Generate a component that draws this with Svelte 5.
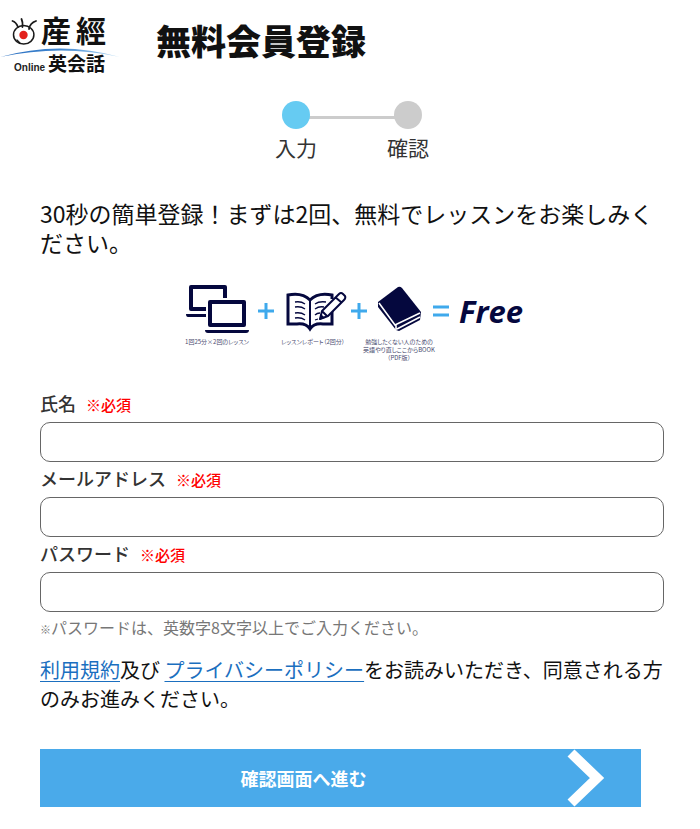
<script lang="ts">
	const steps = [
		{ label: '入力', active: true },
		{ label: '確認', active: false }
	];

	const fields = [
		{ id: 'name', label: '氏名', type: 'text' },
		{ id: 'email', label: 'メールアドレス', type: 'email' },
		{ id: 'password', label: 'パスワード', type: 'password' }
	];

	let values: Record<string, string> = $state({ name: '', email: '', password: '' });
</script>

<header class="header">
	<svg class="logo" viewBox="0 0 120 80" role="img" aria-label="産經Online英会話">
		<defs>
			<linearGradient id="arc">
				<stop offset="0" stop-color="#2c6fc0" />
				<stop offset="0.5" stop-color="#3f86d0" />
				<stop offset="1" stop-color="#b9dcf3" />
			</linearGradient>
		</defs>
		<g fill="none" stroke="#1a1a1a" stroke-linecap="round">
			<ellipse cx="23.700" cy="34.800" rx="10.200" ry="9.300" stroke-width="1.500" />
			<path d="M18 27Q16 22 12.500 21M22.500 27Q23 22 21.500 19M29 29Q30 23 36 21" stroke-width="1.800" />
			<path d="M17 40L20 43" stroke-width="1.200" />
		</g>
		<circle cx="23.500" cy="35" r="4.200" fill="#e3211c" />
		<path d="M0 57Q60 40 120 57Q62 44 0 57Z" fill="url(#arc)" />
		<text class="logo-main" x="41" y="42">産</text>
		<text class="logo-main" x="76" y="42">經</text>
		<text class="logo-online" x="14" y="71">Online</text>
		<text class="logo-sub" x="48" y="71">英会話</text>
	</svg>
	<h1>無料会員登録</h1>
</header>

<main class="main">
	<ol class="steps">
		{#each steps as step}
			<li class="step" class:active={step.active} aria-current={step.active ? 'step' : undefined}>
				<span class="dot"></span>
				<span>{step.label}</span>
			</li>
		{/each}
	</ol>

	<p class="intro">30秒の簡単登録！まずは2回、無料でレッスンをお楽しみください。</p>

	<svg class="offer" viewBox="0 0 340 80" role="img" aria-label="レッスン、レポート、BOOKが無料">
		<!-- two laptops -->
		<g fill="none" stroke="#05083e" stroke-width="4" stroke-linejoin="round">
			<path d="M43 15V4H9V26H24" />
			<rect x="28" y="19" width="34" height="23" />
		</g>
		<path d="M4 31H24V34H6Q4 34 4 31ZM23 47H67Q67 50 64 50H26Q23 50 23 47Z" fill="#05083e" />

		<!-- open book and pencil -->
		<g fill="none" stroke="#05083e" stroke-width="3">
			<path d="M150 16V12Q136 9 128 17Q120 9 106 12V41H115Q124 40 128 46Q132 40 141 41H150V28" />
			<path d="M128 17V46" stroke-width="2" />
		</g>
		<g fill="none" stroke="#05083e" stroke-width="1.300">
			<path d="M113 19Q119 18 123 21M113 24Q119 23 123 26M113 30Q119 29 123 32M113 35Q119 34 123 37" />
			<path d="M133 21Q137 18 144 19M133 26Q137 23 142 24M133 32Q135 30 138 30M133 37L136 36" />
		</g>
		<path d="M140 28L157 11Q159 9 161 11L163 13Q164 15 162 17L146 33L138 36ZM140 28L145 33M153 14L159 19" fill="#fff" stroke="#05083e" stroke-width="2" stroke-linejoin="round" />
		<path d="M137 37L139 31L143 35Z" fill="#05083e" />

		<!-- closed book -->
		<path d="M196 19L216 4Q218 3 220 5L239 29L238 37L217 48L214 47L196 24Z" fill="#05083e" />
		<path d="M197 20L213 42L238 30M215 46L238 34M214 42V47" fill="none" stroke="#fff" stroke-width="1.600" />

		<g fill="none" stroke="#3fa9ec" stroke-width="3">
			<path d="M76 28H92M84 20V36M169 28H185M177 20V36M251 24H267M251 32H267" />
		</g>
		<text class="free" x="277" y="40">Free</text>

		<g class="caption">
			<text x="35" y="61">1回25分×2回のレッスン</text>
			<text x="131" y="61">レッスンレポート（2回分）</text>
			<text x="217" y="61">勉強したくない人のための</text>
			<text x="217" y="69">英語やり直しここからBOOK</text>
			<text x="217" y="77">（PDF版）</text>
		</g>
	</svg>

	<form class="form" onsubmit={(e) => e.preventDefault()}>
		{#each fields as field}
			<div class="field">
				<label for={field.id}>{field.label}<span class="required">※必須</span></label>
				<input id={field.id} name={field.id} type={field.type} bind:value={values[field.id]} />
			</div>
		{/each}
		<p class="note"><small>※</small>パスワードは、英数字8文字以上でご入力ください。</p>

		<p class="terms">
			<a href="#terms">利用規約</a>及び <a href="#privacy">プライバシーポリシー</a>をお読みいただき、同意される方のみお進みください。
		</p>

		<button type="submit" class="submit">
			<span>確認画面へ進む</span>
			<svg viewBox="0 0 38 58" aria-hidden="true">
				<path d="M4 4L30 29L4 54" fill="none" stroke="#fff" stroke-width="10" />
			</svg>
		</button>
	</form>
</main>

<style>
	:global(body) {
		background: #fff;
		color: #111;
		font-family: 'Noto Sans CJK JP', sans-serif;
	}

	.header {
		display: flex;
		align-items: center;
		gap: 36px;
		height: 80px;
	}

	.logo {
		width: 120px;
		height: 80px;
		flex: none;
	}

	.logo-main {
		font-size: 30px;
		font-weight: 700;
		fill: #111;
	}

	.logo-online {
		font-family: 'Liberation Sans', sans-serif;
		font-size: 10px;
		font-weight: 700;
		fill: #222;
	}

	.logo-sub {
		font-size: 19px;
		font-weight: 700;
		fill: #111;
	}

	h1 {
		margin: 0;
		font-size: 35px;
		font-weight: 900;
		line-height: 48px;
	}

	.main {
		padding: 21px 36px 22px 40px;
	}

	.steps {
		display: flex;
		justify-content: center;
		gap: 70px;
		margin: 0 0 36px;
		padding: 0;
		list-style: none;
		font-size: 21px;
		line-height: 32px;
		color: #333;
	}

	.step {
		position: relative;
		display: flex;
		flex-direction: column;
		align-items: center;
		gap: 2px;
	}

	.step + .step::before {
		content: '';
		position: absolute;
		top: 15px;
		right: 50%;
		width: 112px;
		height: 3px;
		background: #ccc;
	}

	.dot {
		width: 28px;
		height: 28px;
		border-radius: 50%;
		background: #ccc;
	}

	.active .dot {
		position: relative;
		z-index: 1;
		background: #66cbf2;
	}

	.intro {
		margin: 0;
		font-size: 23px;
		line-height: 29px;
	}

	.offer {
		display: block;
		width: 340px;
		height: 80px;
		margin: 26px auto 24px;
		overflow: visible;
	}

	.free {
		font-family: 'Open Sans', sans-serif;
		font-size: 31px;
		font-style: italic;
		font-weight: 700;
		fill: #05083e;
	}

	.caption {
		font-size: 6px;
		font-feature-settings: 'palt';
		fill: #4a4c70;
		text-anchor: middle;
	}

	.field label {
		display: flex;
		align-items: baseline;
		gap: 10px;
		height: 35px;
		font-size: 18px;
		font-weight: 500;
		line-height: 33px;
		color: #333;
	}

	.required {
		font-size: 15px;
		color: #f00;
	}

	.field input {
		display: block;
		box-sizing: border-box;
		width: 100%;
		height: 40px;
		padding: 0 12px;
		border: 1px solid #666;
		border-radius: 10px;
		background: #fff;
		font: inherit;
		font-size: 18px;
	}

	.note {
		margin: 3px 0 0;
		font-size: 16px;
		line-height: 24px;
		color: #777;
	}

	.note small {
		font-size: 11px;
	}

	.terms {
		margin: 14px 0 36px;
		font-size: 20px;
		line-height: 29px;
	}

	.terms a {
		color: #1b6fbf;
		text-underline-offset: 3px;
		text-decoration-thickness: 1px;
	}

	.submit {
		display: flex;
		align-items: center;
		width: calc(100% - 23px);
		height: 58px;
		padding: 0 36px 0 0;
		border: 0;
		background: #4aaaea;
		color: #fff;
		font: inherit;
		font-size: 18px;
		font-weight: 700;
		cursor: pointer;
	}

	.submit span {
		flex: 1;
	}

	.submit svg {
		width: 38px;
		height: 58px;
	}
</style>
